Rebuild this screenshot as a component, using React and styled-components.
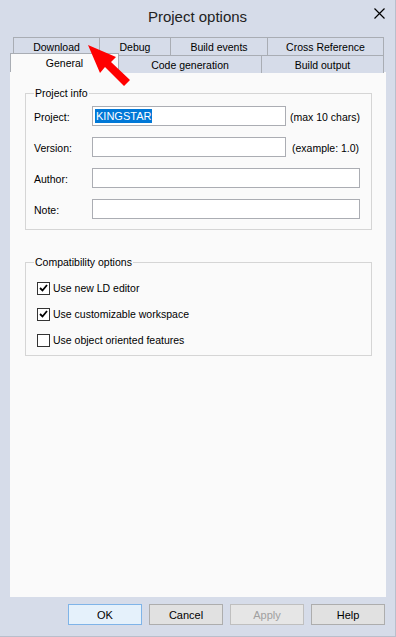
import styled, { createGlobalStyle } from 'styled-components';

const GlobalStyle = createGlobalStyle`
  html, body {
    margin: 0;
    padding: 0;
    background: #d6dce9;
  }
  body {
    font-family: "Liberation Sans", Arial, sans-serif;
    font-size: 10.5px;
    color: #000;
  }
`;

const Window = styled.div`
  position: relative;
  width: 396px;
  height: 637px;
  box-sizing: border-box;
  background: #d6dce9;
  border-right: 1px solid #b9bfcc;
  border-bottom: 1px solid #b9bfcc;
  display: flex;
  flex-direction: column;
  overflow: hidden;
`;

const TitleBar = styled.div`
  height: 37px;
  display: grid;
  grid-template-columns: 1fr auto 1fr;
  align-items: start;
`;

const Title = styled.div`
  grid-column: 2;
  padding-top: 8px;
  font-size: 15px;
  line-height: 18px;
  color: #222;
`;

const CloseButton = styled.div`
  grid-column: 3;
  justify-self: end;
  width: 11px;
  height: 11px;
  margin: 8px 10px 0 0;
  display: flex;
`;

const TabStrip = styled.div`
  position: relative;
  z-index: 1;
  display: flex;
  flex-direction: column;
  margin-left: 10px;
`;

const TabRow = styled.div`
  display: flex;
  height: ${(p) => p.$height}px;
  padding-left: ${(p) => p.$indent}px;
`;

const Tab = styled.div`
  box-sizing: border-box;
  width: ${(p) => p.$width}px;
  height: ${(p) => (p.$active ? 19 : 18)}px;
  margin-top: ${(p) => (p.$active ? -2 : 0)}px;
  margin-left: -1px;
  &:first-child {
    margin-left: 0;
  }
  border: 1px solid #a9adb4;
  border-bottom: none;
  background: ${(p) => (p.$active ? '#fafafa' : '#d6dce9')};
  display: flex;
  align-items: center;
  justify-content: center;
  padding-top: ${(p) => (p.$active ? 0 : 1)}px;
  line-height: 13px;
  white-space: nowrap;
`;

const Panel = styled.div`
  box-sizing: border-box;
  margin-left: 10px;
  width: 376px;
  height: 525px;
  background: #fafafa;
  padding: 15px 14px 0 15px;
  display: flex;
  flex-direction: column;
  gap: 26px;
`;

const Group = styled.fieldset`
  margin: 0;
  padding: ${(p) => p.$pad};
  border: 1px solid #d5d5d5;
  min-width: 0;
  width: 347px;
  box-sizing: border-box;
  display: flex;
  flex-direction: column;
  gap: ${(p) => p.$gap}px;
`;

const Legend = styled.legend`
  padding: 0 1px;
  margin-left: 0;
  line-height: 13px;
`;

const FieldRow = styled.div`
  display: flex;
  align-items: center;
  height: 20px;
`;

const FieldLabel = styled.span`
  width: 58px;
  flex-shrink: 0;
  padding-top: 2px;
`;

const TextBox = styled.div`
  box-sizing: border-box;
  width: ${(p) => p.$width}px;
  height: 20px;
  border: 1px solid #abadb3;
  background: #fff;
  display: flex;
  align-items: center;
  padding-left: 2px;
`;

const Selected = styled.span`
  background: #0078d7;
  color: #fff;
  line-height: 14px;
  padding: 0 1px;
  font-size: 11px;
`;

const Hint = styled.span`
  margin-left: ${(p) => p.$gap}px;
  padding-top: 2px;
  white-space: nowrap;
`;

const CheckRow = styled.label`
  display: flex;
  align-items: center;
  height: 16px;
  gap: 3px;
  padding-left: 3px;
`;

const Box = styled.span`
  box-sizing: border-box;
  width: 13px;
  height: 13px;
  border: 1px solid #333;
  background: #fff;
  display: flex;
  align-items: center;
  justify-content: center;
`;

const ButtonBar = styled.div`
  display: flex;
  justify-content: flex-end;
  gap: 7px;
  margin-top: 7px;
  padding-right: 10px;
`;

const Button = styled.div`
  box-sizing: border-box;
  width: 74px;
  height: 21px;
  display: flex;
  align-items: center;
  justify-content: center;
  font-size: 11px;
  border: 1px solid ${(p) => (p.$primary ? '#7fb4e8' : p.$disabled ? '#bfbfbf' : '#adadad')};
  background: ${(p) => (p.$primary ? '#e5f1fb' : p.$disabled ? '#e6e6e6' : '#e1e1e1')};
  color: ${(p) => (p.$disabled ? '#a0a0a0' : '#000')};
`;

const Arrow = styled.svg`
  position: absolute;
  left: 0;
  top: 0;
  z-index: 2;
  pointer-events: none;
`;

function Check({ checked, label }) {
  return (
    <CheckRow>
      <Box>
        {checked && (
          <svg width="9" height="8" viewBox="0 0 9 8">
            <path d="M1 4 L3.5 6.5 L8 1" fill="none" stroke="#000" strokeWidth="1.8" />
          </svg>
        )}
      </Box>
      {label}
    </CheckRow>
  );
}

export default function App() {
  return (
    <>
      <GlobalStyle />
      <Window>
        <TitleBar>
          <Title>Project options</Title>
          <CloseButton>
            <svg width="11" height="11" viewBox="0 0 11 11">
              <path d="M0.5 0.5 L10.5 10.5 M10.5 0.5 L0.5 10.5" stroke="#000" strokeWidth="1.2" />
            </svg>
          </CloseButton>
        </TitleBar>

        <TabStrip>
          <TabRow $height={18} $indent={3}>
            <Tab $width={87}>Download</Tab>
            <Tab $width={72}>Debug</Tab>
            <Tab $width={98}>Build events</Tab>
            <Tab $width={117}>Cross Reference</Tab>
          </TabRow>
          <TabRow $height={17} $indent={0}>
            <Tab $width={109} $active>General</Tab>
            <Tab $width={144}>Code generation</Tab>
            <Tab $width={123}>Build output</Tab>
          </TabRow>
        </TabStrip>

        <Panel>
          <Group $pad="6px 8px 10px 8px" $gap={11}>
            <Legend>Project info</Legend>
            <FieldRow>
              <FieldLabel>Project:</FieldLabel>
              <TextBox $width={194}>
                <Selected>KINGSTAR</Selected>
              </TextBox>
              <Hint $gap={4}>(max 10 chars)</Hint>
            </FieldRow>
            <FieldRow>
              <FieldLabel>Version:</FieldLabel>
              <TextBox $width={194} />
              <Hint $gap={6}>(example: 1.0)</Hint>
            </FieldRow>
            <FieldRow>
              <FieldLabel>Author:</FieldLabel>
              <TextBox $width={268} />
            </FieldRow>
            <FieldRow>
              <FieldLabel>Note:</FieldLabel>
              <TextBox $width={268} />
            </FieldRow>
          </Group>

          <Group $pad="11px 8px 7px 8px" $gap={10}>
            <Legend>Compatibility options</Legend>
            <Check checked label="Use new LD editor" />
            <Check checked label="Use customizable workspace" />
            <Check label="Use object oriented features" />
          </Group>
        </Panel>

        <ButtonBar>
          <Button $primary>OK</Button>
          <Button>Cancel</Button>
          <Button $disabled>Apply</Button>
          <Button>Help</Button>
        </ButtonBar>

        <Arrow width="140" height="90" viewBox="0 0 140 90">
          <polygon points="88,45 116,57 111,62 130,80 124,86 105,67 100,73" fill="#f00" />
        </Arrow>
      </Window>
    </>
  );
}
